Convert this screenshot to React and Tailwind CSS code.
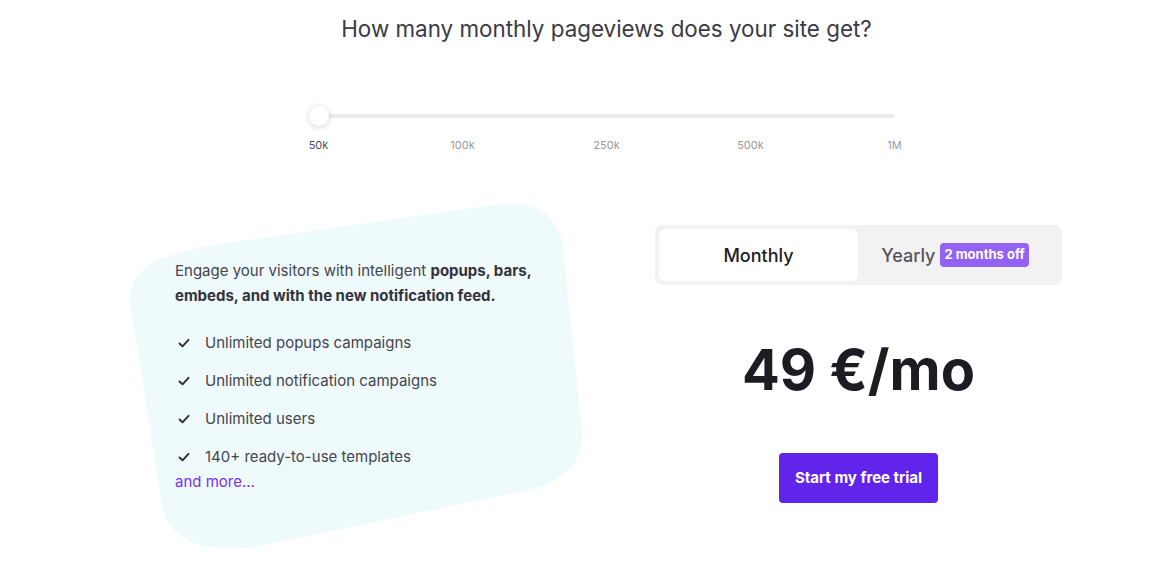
import React from "react";

function Check() {
  return (
    <svg width="12" height="12" viewBox="0 0 12 12" fill="none">
      <path d="M1.5 6.5 L4.5 9.3 L10.5 2.8" stroke="#2f2f36" strokeWidth="1.9" strokeLinecap="round" strokeLinejoin="round" />
    </svg>
  );
}

const items = [
  "Unlimited popups campaigns",
  "Unlimited notification campaigns",
  "Unlimited users",
  "140+ ready-to-use templates",
];

export default function App() {
  return (
    <div className="w-[1161px] h-[561px] bg-white overflow-hidden" style={{ fontFamily: "Inter, 'Noto Sans', sans-serif" }}>
      {/* Top: question + slider */}
      <div className="pl-[52px] pt-[13px] flex flex-col items-center">
        <h1 className="text-[22.4px] leading-[32px] text-[#3b3b45] font-normal">
          How many monthly pageviews does your site get?
        </h1>
        <div className="mt-[59px] w-[616px] flex flex-col">
          <div className="relative h-[24px] flex items-center px-[20px]">
            <div className="w-full h-[4px] rounded-full bg-[#ececef]" />
            <div className="absolute left-[10px] top-[2px] w-[20px] h-[20px] rounded-full bg-white shadow-[0_1px_6px_rgba(0,0,0,0.18)]" />
          </div>
          <div className="mt-[10px] flex justify-between text-[11px] leading-[14px] text-[#9a9aa2]">
            <span className="text-[#4b4b52] w-[40px] text-center">50k</span>
            <span className="w-[40px] text-center">100k</span>
            <span className="w-[40px] text-center">250k</span>
            <span className="w-[40px] text-center">500k</span>
            <span className="w-[40px] text-center">1M</span>
          </div>
        </div>
      </div>

      {/* Bottom */}
      <div className="mt-[44px] flex">
        {/* Left card */}
        <div className="relative ml-[120px] w-[470px] h-[360px] shrink-0">
          <svg className="absolute inset-0" width="470" height="360" viewBox="0 0 470 360">
            <path
              d="M120 45 L380 8 C420 3 440 25 443 50 L462 235 C465 275 430 292 393 297 L140 350 C80 360 50 340 43 315 L10 105 C8 67 50 55 120 45 Z"
              fill="#effafc"
            />
          </svg>
          <div className="relative pl-[55px] pt-[62px] pr-[40px]">
            <p className="text-[15px] leading-[25px] text-[#45454d]">
              Engage your visitors with intelligent{" "}
              <span className="font-bold text-[#33333b]">popups, bars, embeds, and with the new notification feed.</span>
            </p>
            <ul className="mt-[23px] flex flex-col gap-[14px]">
              {items.map((t) => (
                <li key={t} className="flex items-center h-[24px] text-[15px] text-[#45454d]">
                  <span className="w-[30px] pl-[3px] flex items-center"><Check /></span>
                  <span>{t}</span>
                </li>
              ))}
            </ul>
            <a className="block mt-[3px] text-[15px] leading-[20px] text-[#7c2ff0]">and more...</a>
          </div>
        </div>

        {/* Right column */}
        <div className="ml-[65px] w-[407px] flex flex-col items-center pt-[29px]">
          <div className="w-full h-[60px] rounded-[7px] bg-[#f2f2f3] p-[4px] flex">
            <div className="w-[199px] h-full rounded-[6px] bg-white flex items-center justify-center text-[18px] font-medium text-[#1d1d22]">
              Monthly
            </div>
            <div className="flex-1 flex items-center justify-center gap-[5px] pr-[6px]">
              <span className="text-[18px] font-medium text-[#55555c]">Yearly</span>
              <span className="h-[24px] px-[4px] rounded-[4px] bg-[#9362f2] text-white text-[13px] font-bold flex items-center">
                2 months off
              </span>
            </div>
          </div>
          <div className="mt-[50px] text-[56px] leading-[70px] font-bold text-[#1c1c22]">
            49 €/mo
          </div>
          <button className="mt-[48px] w-[159px] h-[50px] rounded-[4px] bg-[#6124ea] text-white text-[15px] font-bold">
            Start my free trial
          </button>
        </div>
      </div>
    </div>
  );
}
